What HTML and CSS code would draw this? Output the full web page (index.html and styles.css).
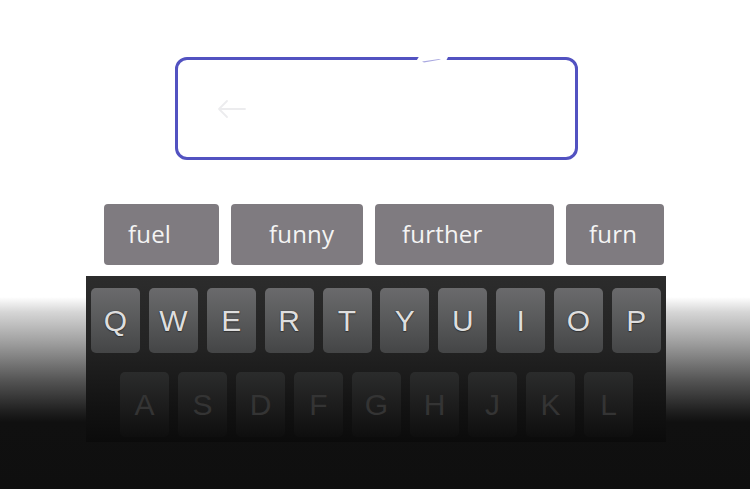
FILE: index.html
```html
<!DOCTYPE html>
<html lang="en">
<head>
<meta charset="utf-8">
<title>Keyboard suggestions</title>
<link rel="stylesheet" href="styles.css">
</head>
<body>
<main class="screen">
  <div class="field">
    <svg class="back-arrow" width="30" height="20" viewBox="0 0 30 20" aria-hidden="true">
      <path d="M28 10H2M10 2L2 10L10 18" fill="none" stroke="#ececee" stroke-width="1.8" stroke-linecap="round" stroke-linejoin="round"/>
    </svg>
    <svg class="nick" width="40" height="12" viewBox="0 0 40 12" aria-hidden="true">
      <polygon points="3,10 8,2 37,2 33,10" fill="#ffffff"/>
      <polygon points="10,8.6 27,6 29,6.6 12,9.4" fill="#a9a8e0"/>
    </svg>
  </div>

  <div class="suggestions">
    <div class="chip chip-fuel">fuel</div>
    <div class="chip chip-funny">funny</div>
    <div class="chip chip-further">further</div>
    <div class="chip chip-furn">furn</div>
  </div>

  <div class="keyboard">
    <div class="row row-top">
      <div class="key">Q</div>
      <div class="key">W</div>
      <div class="key">E</div>
      <div class="key">R</div>
      <div class="key">T</div>
      <div class="key">Y</div>
      <div class="key">U</div>
      <div class="key">I</div>
      <div class="key">O</div>
      <div class="key">P</div>
    </div>
    <div class="row row-home">
      <div class="key">A</div>
      <div class="key">S</div>
      <div class="key">D</div>
      <div class="key">F</div>
      <div class="key">G</div>
      <div class="key">H</div>
      <div class="key">J</div>
      <div class="key">K</div>
      <div class="key">L</div>
    </div>
  </div>
</main>
</body>
</html>
```

FILE: styles.css
```css
* {
  box-sizing: border-box;
}

html, body {
  margin: 0;
  padding: 0;
  height: 489px;
  overflow: hidden;
}

body {
  font-family: "Liberation Sans", Arial, sans-serif;
  background: linear-gradient(to bottom,
    #ffffff 0px,
    #ffffff 297px,
    #d6d6d6 312px,
    #9a9a9a 345px,
    #555555 380px,
    #1e1e1e 412px,
    #101010 422px,
    #0f0f0f 489px);
}

.screen {
  display: flex;
  flex-direction: column;
  align-items: flex-start;
  padding-top: 57px;
}

/* input field */
.field {
  position: relative;
  margin-left: 175px;
  width: 403px;
  height: 103px;
  border: 3px solid #5252c1;
  border-radius: 12px;
  background: #ffffff;
  display: flex;
  align-items: center;
  padding-left: 39px;
}

.back-arrow {
  display: block;
}

.nick {
  position: absolute;
  left: 234px;
  top: -7px;
}

/* suggestions */
.suggestions {
  display: flex;
  gap: 12px;
  margin-top: 44px;
  margin-left: 104px;
}

.chip {
  height: 61px;
  border-radius: 4px;
  background: #7f7b80;
  color: #f4f4f4;
  font-family: "Open Sans", "Noto Sans", sans-serif;
  font-size: 24px;
  display: flex;
  align-items: center;
  padding-bottom: 2px;
  letter-spacing: 0.2px;
}

.chip-fuel { width: 115px; padding-left: 24px; }
.chip-funny { width: 132px; padding-left: 38px; }
.chip-further { width: 179px; padding-left: 27px; }
.chip-furn { width: 98px; padding-left: 23px; }

/* keyboard */
.keyboard {
  margin-top: 11px;
  margin-left: 86px;
  width: 580px;
  height: 166px;
  padding: 12px 5px 0 5px;
  background: linear-gradient(to bottom, #2c2c2c 0%, #222222 45%, #121212 80%, #0b0b0b 100%);
}

.row {
  display: flex;
  justify-content: space-between;
}

.row-top {
  width: 570px;
}

.row-home {
  width: 513px;
  margin-left: 29px;
  margin-top: 19px;
}

.key {
  width: 49px;
  height: 65px;
  border-radius: 5px;
  display: flex;
  align-items: center;
  justify-content: center;
  font-size: 30px;
  line-height: 1;
}

.row-top .key {
  background: linear-gradient(to bottom, #6a6a6c 0%, #58595a 50%, #444546 100%);
  color: #dedede;
  text-shadow: 0 0 1px #2a2a2a, 0 1px 1px #333;
}

.row-home .key {
  background: linear-gradient(to bottom, #2b2c2c 0%, #1d1d1d 50%, #0e0e0e 100%);
  color: #343434;
}
```
